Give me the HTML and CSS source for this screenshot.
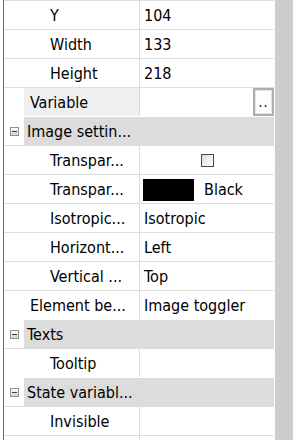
FILE: index.html
```html
<!DOCTYPE html>
<html>
<head>
<meta charset="utf-8">
<link rel="stylesheet" href="styles.css">
</head>
<body>
<div class="pg">
  <div class="grid">
    <div class="row"><div class="margin"></div><div class="name l2">Y</div><div class="value">104</div></div>
    <div class="row"><div class="margin"></div><div class="name l2">Width</div><div class="value">133</div></div>
    <div class="row"><div class="margin"></div><div class="name l2">Height</div><div class="value">218</div></div>
    <div class="row"><div class="margin"></div><div class="name l1 sel">Variable</div><div class="value end"><span class="dots">..</span></div></div>
    <div class="row cat"><div class="margin"><span class="minus"></span></div><div class="cat-name">Image settin...</div></div>
    <div class="row"><div class="margin"></div><div class="name l2">Transpar...</div><div class="value center"><span class="check"></span></div></div>
    <div class="row"><div class="margin"></div><div class="name l2">Transpar...</div><div class="value"><span class="swatch"></span><span class="swatch-label">Black</span></div></div>
    <div class="row"><div class="margin"></div><div class="name l2">Isotropic...</div><div class="value">Isotropic</div></div>
    <div class="row"><div class="margin"></div><div class="name l2">Horizont...</div><div class="value">Left</div></div>
    <div class="row"><div class="margin"></div><div class="name l2">Vertical ...</div><div class="value">Top</div></div>
    <div class="row"><div class="margin"></div><div class="name l1">Element be...</div><div class="value">Image toggler</div></div>
    <div class="row cat"><div class="margin"><span class="minus"></span></div><div class="cat-name">Texts</div></div>
    <div class="row"><div class="margin"></div><div class="name l2">Tooltip</div><div class="value"></div></div>
    <div class="row cat"><div class="margin"><span class="minus"></span></div><div class="cat-name">State variabl...</div></div>
    <div class="row"><div class="margin"></div><div class="name l2">Invisible</div><div class="value"></div></div>
    <div class="row"><div class="margin"></div><div class="name l2"></div><div class="value"></div></div>
  </div>
  <div class="scroll"></div>
</div>
</body>
</html>
```
FILE: styles.css
```css
html, body {
  margin: 0;
  padding: 0;
  background: #fff;
}
.pg {
  display: flex;
  height: 440px;
  overflow: hidden;
  padding-left: 3px;
  font-family: "DejaVu Sans Condensed", "DejaVu Sans", sans-serif;
  font-size: 16px;
  color: #000;
}
.grid {
  width: 272px;
  box-sizing: border-box;
  border-left: 1px solid #696969;
  background: #fff;
  flex: none;
}
.row {
  display: flex;
  width: 270px;
  height: 29px;
  box-sizing: border-box;
  border-top: 1px solid #dcdcdc;
}
.margin {
  width: 20px;
  flex: none;
  display: flex;
  align-items: center;
  justify-content: center;
}
.name {
  width: 115px;
  flex: none;
  border-right: 1px solid #dcdcdc;
  display: flex;
  align-items: center;
  white-space: nowrap;
  overflow: hidden;
}
.name.l2 { padding-left: 26px; box-sizing: border-box; width: 116px; }
.name.l1 { padding-left: 6px; box-sizing: border-box; width: 116px; }
.name.sel { background: #f0f0f0; }
.value {
  width: 134px;
  flex: none;
  display: flex;
  align-items: center;
  padding-left: 4px;
  box-sizing: border-box;
  white-space: nowrap;
}
.value.center { justify-content: center; padding-left: 0; }
.value.end { justify-content: flex-end; padding-left: 0; }
.dots {
  width: 21px;
  height: 28px;
  box-sizing: border-box;
  border: 2px solid #adadad;
  box-shadow: inset 0 0 0 1px #e4e4e4;
  background: #fdfdfd;
  display: flex;
  align-items: flex-end;
  justify-content: center;
  font-size: 14px;
  line-height: 14px;
  padding-bottom: 5px;
  letter-spacing: 1px;
}
.cat {
  border-top-color: #fff;
}
.cat-name {
  width: 250px;
  flex: none;
  background: #dcdcdc;
  display: flex;
  align-items: center;
  padding-left: 3px;
  box-sizing: border-box;
  white-space: nowrap;
}
.minus {
  width: 9px;
  height: 9px;
  box-sizing: border-box;
  border: 1px solid #919191;
  background: linear-gradient(#fcfcfc, #d4d4d4);
  position: relative;
}
.minus::after {
  content: "";
  position: absolute;
  left: 1px;
  top: 3px;
  width: 5px;
  height: 1px;
  background: #3a3a3a;
}
.check {
  width: 13px;
  height: 13px;
  box-sizing: border-box;
  border: 1px solid #334d6e;
  background: linear-gradient(135deg, #dcdcdc, #ffffff);
  margin-left: 1px;
}
.swatch {
  width: 51px;
  height: 22px;
  background: #000;
  margin-left: -1px;
  margin-top: 1px;
}
.swatch-label {
  margin-left: 10px;
}
.scroll {
  flex: 1;
  background: #cdcdcd;
}
```
